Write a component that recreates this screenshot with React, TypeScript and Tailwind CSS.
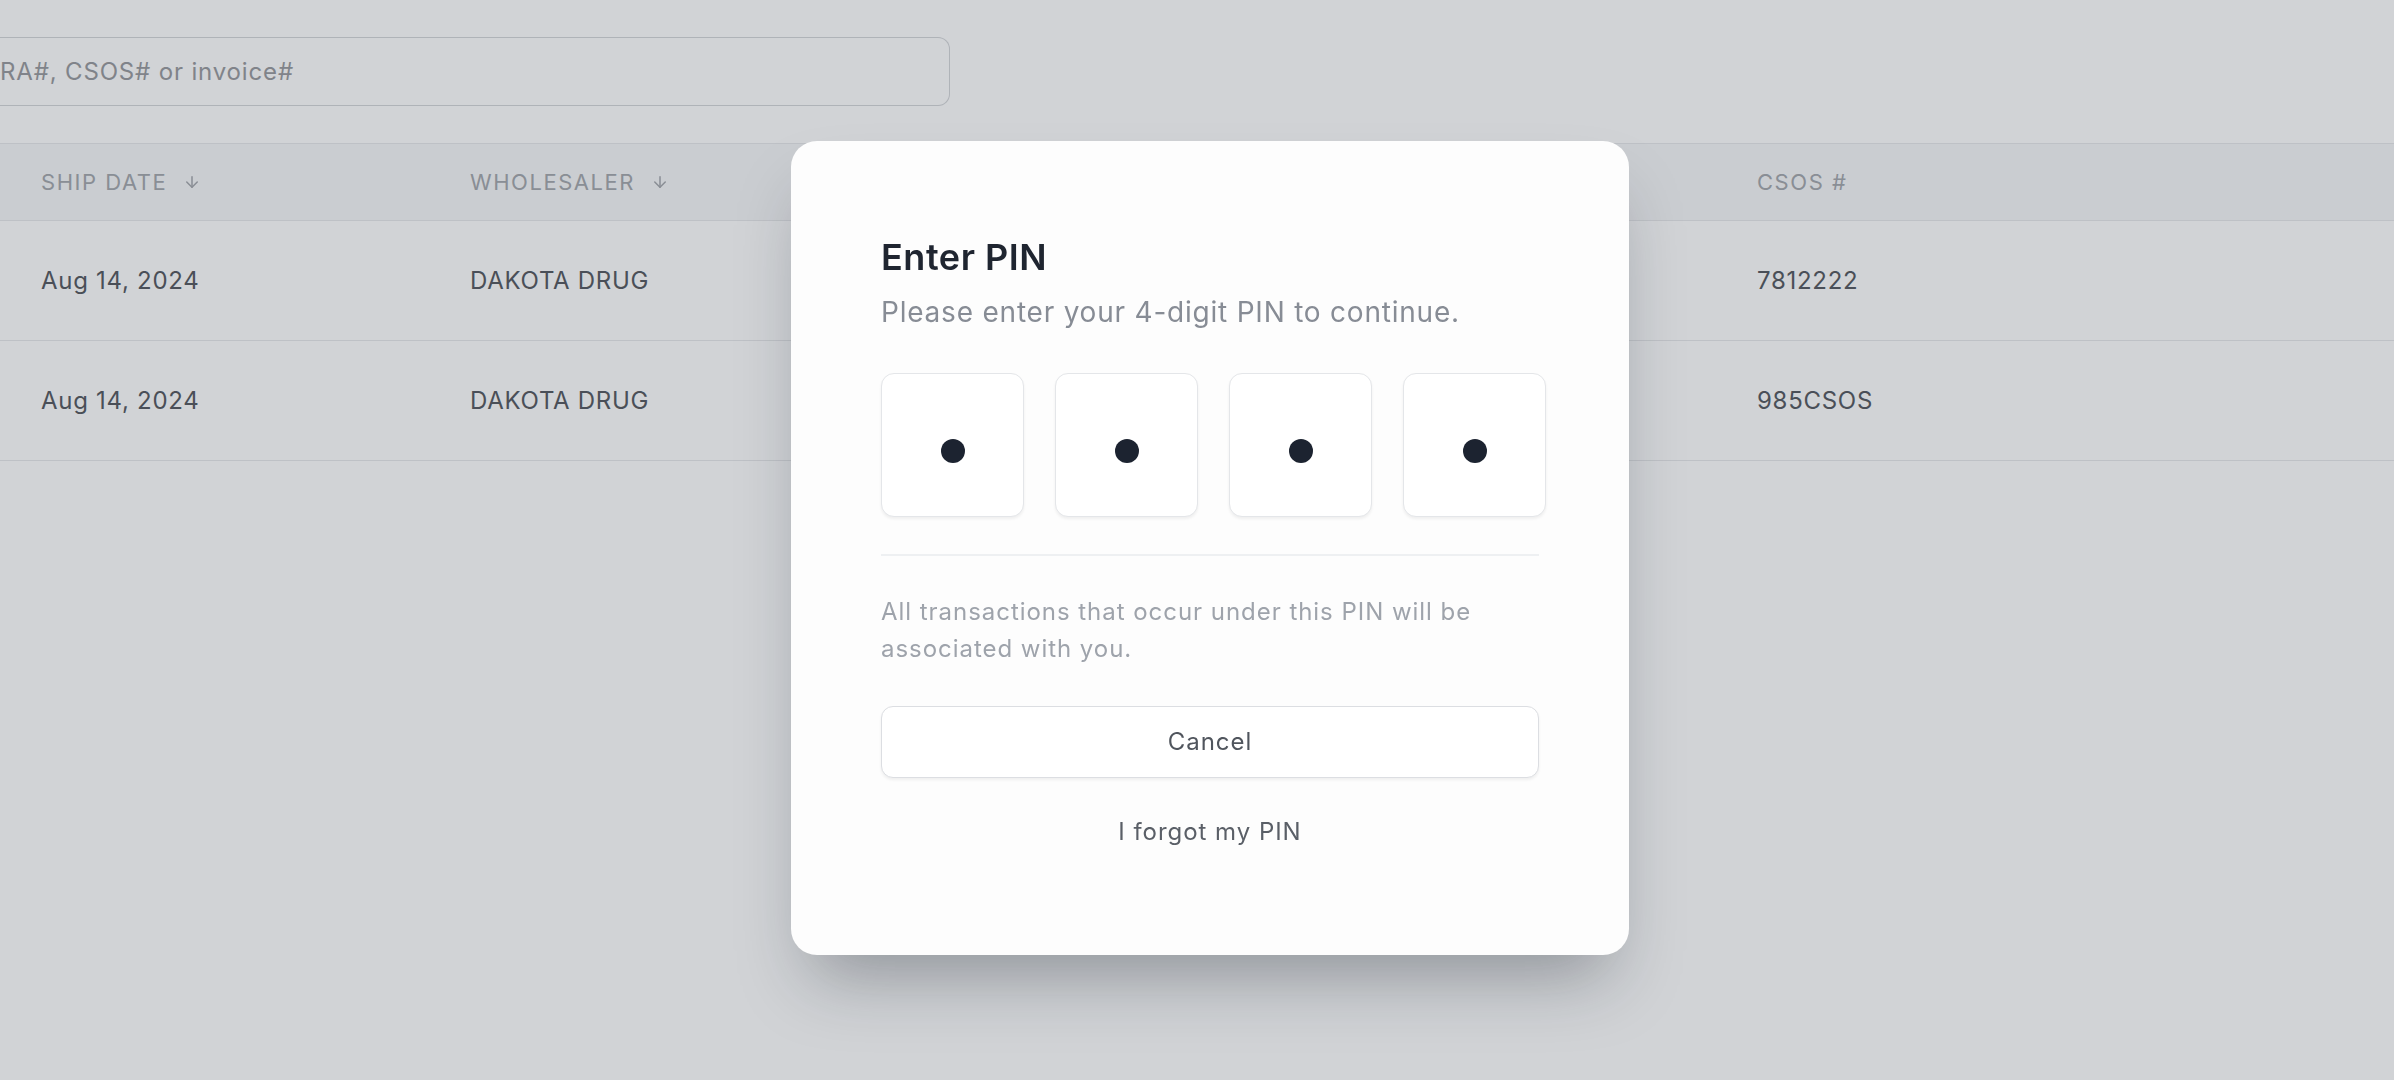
import React from 'react';
import { ArrowDown } from 'lucide-react';

// the two middle columns sit under the dialog, so they are left blank
const columns = [
  { label: 'Ship Date', sortable: true },
  { label: 'Wholesaler', sortable: true },
  { label: '', sortable: false },
  { label: '', sortable: false },
  { label: 'CSOS #', sortable: false },
];

const rows = [
  ['Aug 14, 2024', 'DAKOTA DRUG', '', '', '7812222'],
  ['Aug 14, 2024', 'DAKOTA DRUG', '', '', '985CSOS'],
];

const PinBox: React.FC = () => (
  <div className="w-[143px] h-[144px] shrink-0 flex items-center justify-center pt-[13px] bg-white border border-[#e4e6e9] rounded-[13px] shadow-[0_2px_3px_rgba(0,0,0,0.06)]">
    <div className="w-[24px] h-[24px] rounded-full bg-[#1c2330]" />
  </div>
);

export default function App() {
  return (
    <div className="relative min-h-screen w-full overflow-hidden bg-white font-['Inter',sans-serif]">
      {/* search */}
      <div className="pt-[37px]">
        <div className="w-[950px] h-[69px] flex items-center bg-white border border-l-0 border-[#d5d7da] rounded-r-[12px]">
          <span className="text-[24px] tracking-[0.035em] text-[#9a9ca0] leading-none">RA#, CSOS# or invoice#</span>
        </div>
      </div>

      {/* table */}
      <div className="mt-[37px] border-t border-[#e8e9eb]">
        <div className="grid grid-cols-[429px_429px_429px_429px_1fr] pl-[41px] h-[77px] items-center bg-[#f7f8f9] border-b border-[#e8e9eb]">
          {columns.map((c, i) => (
            <div key={i} className="flex items-center text-[22px] uppercase tracking-[0.07em] text-[#a6a9ae]">
              <span>{c.label}</span>
              {c.sortable && <ArrowDown className="ml-[16px] w-[18px] h-[18px]" strokeWidth={2} />}
            </div>
          ))}
        </div>
        {rows.map((r, i) => (
          <div key={i} className="grid grid-cols-[429px_429px_429px_429px_1fr] pl-[41px] h-[120px] items-center border-b border-[#e8e9eb]">
            {r.map((cell, j) => (
              <div key={j} className="text-[24px] tracking-[0.03em] text-[#575b62]">{cell}</div>
            ))}
          </div>
        ))}
      </div>

      {/* overlay */}
      <div className="fixed inset-0 bg-[#192332]/20" />

      {/* dialog */}
      <div className="fixed inset-0 flex items-center justify-center pl-[26px] pt-[15px]">
        <div className="w-[838px] bg-[#fdfdfd] rounded-[26px] px-[90px] pt-[92px] pb-[89px] shadow-[0_40px_70px_-20px_rgba(20,28,40,0.35)]">
          <h2 className="text-[36px] leading-[48px] font-semibold tracking-[0.015em] text-[#1f2530]">Enter PIN</h2>
          <p className="mt-[10px] text-[28px] leading-[42px] tracking-[0.028em] text-[#878c95]">Please enter your 4-digit PIN to continue.</p>

          <div className="mt-[40px] flex gap-[31px]">
            <PinBox />
            <PinBox />
            <PinBox />
            <PinBox />
          </div>

          <div className="mt-[37px] h-[2px] bg-[#eef0f2]" />

          <p className="mt-[37px] text-[24px] leading-[37px] tracking-[0.04em] text-[#9ea3ab]">
            All transactions that occur under this PIN will be associated with you.
          </p>

          <button className="mt-[39px] w-full h-[72px] bg-white border border-[#dcdee2] rounded-[12px] shadow-[0_2px_3px_rgba(0,0,0,0.06)] text-[24px] tracking-[0.04em] text-[#50555d]">
            Cancel
          </button>

          <button className="mt-[20px] w-full py-[16px] text-[24px] leading-[36px] tracking-[0.04em] text-[#5a5f67]">
            I forgot my PIN
          </button>
        </div>
      </div>
    </div>
  );
}
